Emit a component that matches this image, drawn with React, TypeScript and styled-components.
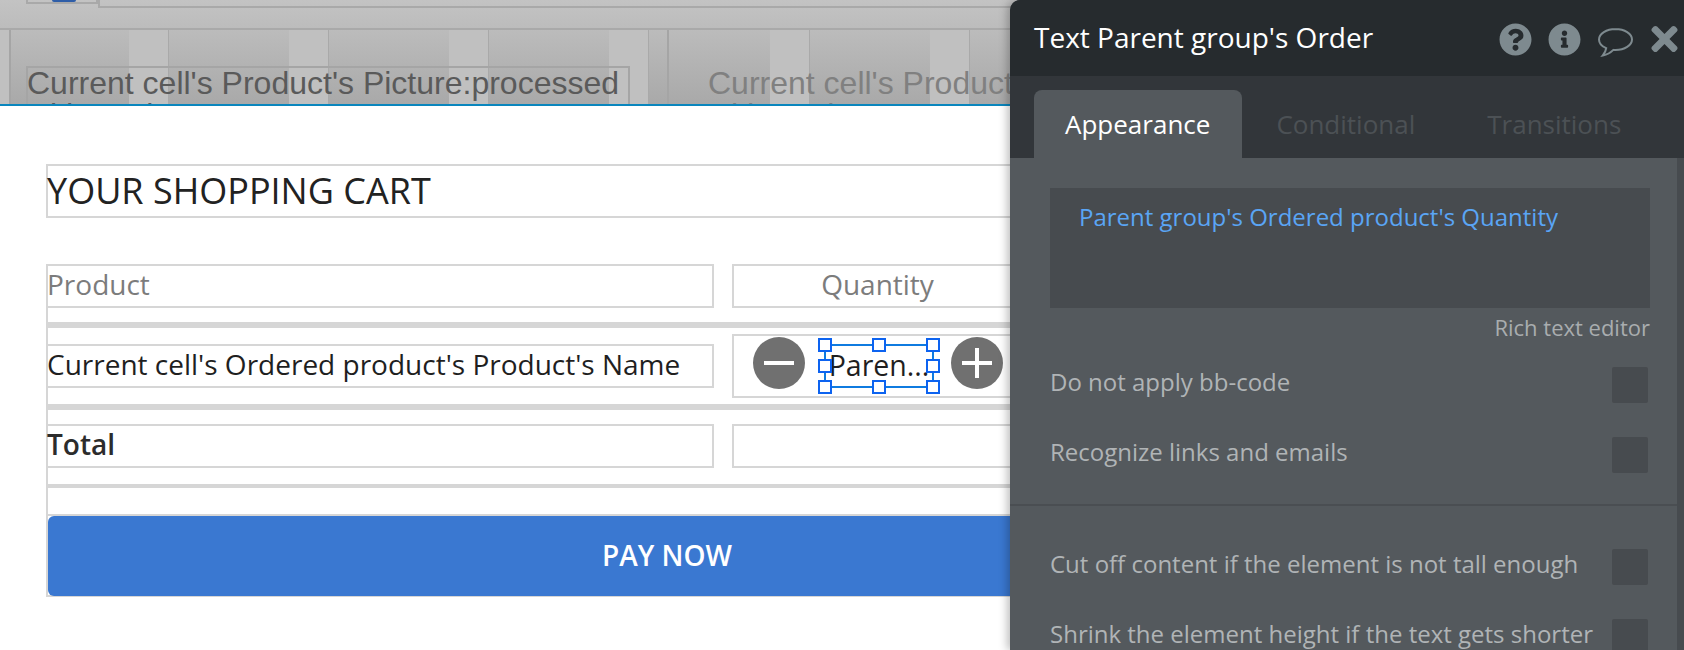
import styled, { createGlobalStyle } from "styled-components";
import { FaQuestionCircle, FaInfoCircle, FaTimes } from "react-icons/fa";

const GlobalStyle = createGlobalStyle`
  html, body {
    margin: 0;
    padding: 0;
    height: 650px;
    overflow: hidden;
    background: #fff;
    font-family: "Open Sans", sans-serif;
  }
  * { box-sizing: border-box; }
`;

const Page = styled.div`
  position: relative;
  width: 1684px;
  height: 650px;
  overflow: hidden;
`;

/* greyed out part of the canvas above the focused group */
const ShadedArea = styled.div`
  height: 106px;
  overflow: hidden;
  background: linear-gradient(180deg, #c3c3c3 0%, #a9a9a9 100%);
  border-bottom: 2px solid #0a86bd;
`;
const ShadedTop = styled.div`
  height: 30px;
  display: flex;
  align-items: flex-start;
  padding-left: 26px;
  border-bottom: 2px solid #a9a9a9;
`;
const LogoBox = styled.div`
  width: 72px;
  height: 4px;
  border: 2px solid #a9a9a9;
  border-top: 0;
  display: flex;
  justify-content: center;
`;
const LogoDot = styled.div`
  width: 24px;
  height: 2px;
  margin-left: 4px;
  border-radius: 0 0 12px 12px;
  background: #2f5ea8;
`;
const TopBar = styled.div`
  flex: 1;
  height: 8px;
  border: 2px solid #a9a9a9;
  border-top: 0;
`;
const CellRow = styled.div`
  display: flex;
  height: 76px;
`;
const Cell = styled.div<{ $width: number; $padLeft: number; $offset: number }>`
  width: ${(p) => p.$width}px;
  flex: none;
  padding: 36px 0 0 ${(p) => p.$padLeft}px;
  border-left: 2px solid #a5a5a5;
  background-image: repeating-linear-gradient(
    90deg,
    rgba(0, 0, 0, 0) 0 120px,
    #c0c0c0 120px 159px,
    #a9a9a9 159px 160px
  );
  background-position-x: ${(p) => p.$offset}px;
`;
const CellEdge = styled.div`
  width: 9px;
  flex: none;
  background: #c0c0c0;
`;
const CellText = styled.div<{ $faded?: boolean }>`
  width: ${(p) => (p.$faded ? "720px" : "604px")};
  height: 70px;
  padding: ${(p) => (p.$faded ? "1px 0 0 0" : "1px 0 0 1px")};
  outline: ${(p) => (p.$faded ? "none" : "2px solid #a5a5a5")};
  outline-offset: -2px;
  font-family: "Liberation Sans", Arial, sans-serif;
  font-size: 32px;
  line-height: 32px;
  color: ${(p) => (p.$faded ? "#808080" : "#5a5a5a")};
  white-space: pre-line;
`;

/* the group in focus */
const Canvas = styled.div`
  padding: 58px 0 0 46px;
`;
const TitleBox = styled.div`
  width: 1300px;
  height: 54px;
  border: 2px solid #d6d6d6;
  font-size: 36px;
  line-height: 50px;
  text-indent: -1px;
  color: #222;
`;
const Table = styled.div`
  width: 1300px;
  margin-top: 46px;
  height: 333px;
  border-left: 2px solid #d6d6d6;
  border-bottom: 2px solid #d6d6d6;
`;
const Row = styled.div<{ $height: number; $pad: number; $rule: number }>`
  height: ${(p) => p.$height}px;
  margin-left: -2px;
  padding-top: ${(p) => p.$pad}px;
  border-bottom: ${(p) => p.$rule}px solid #d6d6d6;
  display: grid;
  grid-template-columns: 668px 292px;
  column-gap: 18px;
  align-items: start;
`;
const TextBox = styled.div<{ $tone?: "muted" | "strong" }>`
  height: 44px;
  border: 2px solid #d6d6d6;
  font-size: 28px;
  line-height: 37px;
  text-indent: -1px;
  font-weight: ${(p) => (p.$tone === "strong" ? 600 : 400)};
  color: ${(p) => (p.$tone === "muted" ? "#7c7c7c" : p.$tone === "strong" ? "#2c2c2c" : "#1f1f1f")};
`;
const QuantityHead = styled(TextBox)`
  text-align: center;
`;
const QuantityBox = styled.div`
  height: 64px;
  margin-top: -10px;
  border: 2px solid #d6d6d6;
  display: flex;
  align-items: center;
  padding-left: 19px;
`;
const RoundButton = styled.div`
  width: 52px;
  height: 52px;
  flex: none;
  margin-bottom: 6px;
  border-radius: 50%;
  background: #707070;
  display: flex;
  align-items: center;
  justify-content: center;
`;
const Selected = styled.div`
  position: relative;
  width: 110px;
  height: 44px;
  margin: 0 17px 0 19px;
  border: 2px solid #0f7be0;
  font-size: 28.5px;
  line-height: 38px;
  color: #1f1f1f;
  text-align: center;
  white-space: nowrap;
`;
const Handle = styled.span<{ $x: 0 | 1 | 2; $y: 0 | 1 | 2 }>`
  position: absolute;
  width: 14px;
  height: 14px;
  background: #fff;
  border: 2px solid #0d63f0;
  left: ${(p) => ["-8px", "calc(50% - 7px)", "calc(100% - 6px)"][p.$x]};
  top: ${(p) => ["-8px", "calc(50% - 7px)", "calc(100% - 6px)"][p.$y]};
`;
const PayRow = styled.div`
  margin: 26px 0 0 0;
  height: 82px;
  border-top: 2px solid #d6d6d6;
`;
const PayButton = styled.div`
  height: 80px;
  background: #3a78d1;
  border-radius: 6px;
  color: #fff;
  font-size: 28px;
  font-weight: 600;
  line-height: 78px;
  padding-left: 554px;
  width: 1298px;
`;

/* property editor */
const Panel = styled.aside`
  position: absolute;
  left: 1010px;
  top: 0;
  width: 674px;
  height: 650px;
  border-radius: 10px 0 0 0;
  background: #54595d;
  overflow: hidden;
  box-shadow: -3px 0 8px rgba(0, 0, 0, 0.25);
`;
const PanelHeader = styled.div`
  height: 76px;
  background: #262b2e;
  display: flex;
  align-items: center;
  padding-left: 24px;
  color: #fff;
  font-size: 28px;
`;
const PanelTitle = styled.div`
  flex: 1;
  margin-top: -2px;
`;
const HeaderIcons = styled.div`
  display: flex;
  align-items: center;
  width: 185px;
  flex: none;
  color: #7e8a8f;
`;
const QuestionIcon = styled(FaQuestionCircle)`
  width: 33px;
  height: 33px;
  margin-top: 2px;
`;
const InfoIcon = styled(FaInfoCircle)`
  width: 33px;
  height: 33px;
  margin: 2px 0 0 16px;
`;
const BubbleIcon = styled.svg`
  width: 37px;
  height: 31px;
  margin: 8px 0 0 16px;
`;
const CloseIcon = styled(FaTimes)`
  width: 27px;
  height: 38px;
  margin: 2px 0 0 17px;
`;
const TabBar = styled.div`
  height: 82px;
  background: #32363a;
  display: flex;
  align-items: flex-end;
  padding-left: 24px;
`;
const Tab = styled.div<{ $active?: boolean }>`
  height: 68px;
  padding: 0 32px 0 31px;
  margin-right: ${(p) => (p.$active ? "3px" : "9px")};
  border-radius: 8px 8px 0 0;
  background: ${(p) => (p.$active ? "#54595d" : "transparent")};
  color: ${(p) => (p.$active ? "#fff" : "#4c5155")};
  font-size: 26px;
  line-height: 68px;
`;
const PanelBody = styled.div`
  position: relative;
  padding: 30px 34px 0 40px;
  height: 492px;
  border-right: 7px solid #474b4f;
`;
const Expression = styled.div`
  height: 120px;
  background: #474b4f;
  padding: 12px 29px;
  margin-right: -7px;
  color: #5aa5f5;
  font-size: 24px;
  line-height: 34px;
`;
const EditorLink = styled.div`
  margin: 4px -7px 0 0;
  text-align: right;
  color: #a9adaf;
  font-size: 22px;
  line-height: 30px;
`;
const Option = styled.div<{ $top: number }>`
  display: flex;
  align-items: center;
  justify-content: space-between;
  height: 36px;
  margin: ${(p) => p.$top}px -5px 0 0;
  color: #b0b4b6;
  font-size: 24px;
  line-height: 34px;
`;
const OptionLabel = styled.span`
  margin-top: -6px;
`;
const CheckBox = styled.div`
  width: 36px;
  height: 36px;
  flex: none;
  background: #474b4f;
  border-radius: 2px;
`;
const Divider = styled.div`
  height: 2px;
  margin: 31px -34px 0 -40px;
  background: #4a4e52;
`;

const handles: Array<[0 | 1 | 2, 0 | 1 | 2]> = [
  [0, 0], [1, 0], [2, 0],
  [0, 1], [2, 1],
  [0, 2], [1, 2], [2, 2],
];

function App() {
  return (
    <Page>
      <GlobalStyle />
      <ShadedArea>
        <ShadedTop>
          <LogoBox><LogoDot /></LogoBox>
          <TopBar />
        </ShadedTop>
        <CellRow>
          <CellEdge />
          <Cell $width={658} $padLeft={15} $offset={-2}>
            <CellText>{"Current cell's Product's Picture:processed\nwith Imgix"}</CellText>
          </Cell>
          <Cell $width={360} $padLeft={39} $offset={-19}>
            <CellText $faded>{"Current cell's Product's Picture:processed\nwith Imgix"}</CellText>
          </Cell>
        </CellRow>
      </ShadedArea>

      <Canvas>
        <TitleBox>YOUR SHOPPING CART</TitleBox>
        <Table>
          <Row $height={64} $pad={0} $rule={6}>
            <TextBox $tone="muted">Product</TextBox>
            <QuantityHead $tone="muted">Quantity</QuantityHead>
          </Row>
          <Row $height={82} $pad={16} $rule={6}>
            <TextBox>Current cell's Ordered product's Product's Name</TextBox>
            <QuantityBox>
              <RoundButton>
                <svg width="30" height="30" viewBox="0 0 30 30">
                  <path d="M0 15h30" stroke="#fff" strokeWidth="4" />
                </svg>
              </RoundButton>
              <Selected>
                Paren...
                {handles.map(([x, y]) => (
                  <Handle key={`${x}-${y}`} $x={x} $y={y} />
                ))}
              </Selected>
              <RoundButton>
                <svg width="30" height="30" viewBox="0 0 30 30">
                  <path d="M0 15h30M15 0v30" stroke="#fff" strokeWidth="4" />
                </svg>
              </RoundButton>
            </QuantityBox>
          </Row>
          <Row $height={78} $pad={14} $rule={4}>
            <TextBox $tone="strong">Total</TextBox>
            <TextBox />
          </Row>
          <PayRow>
            <PayButton>PAY NOW</PayButton>
          </PayRow>
        </Table>
      </Canvas>

      <Panel>
        <PanelHeader>
          <PanelTitle>Text Parent group's Order</PanelTitle>
          <HeaderIcons>
            <QuestionIcon />
            <InfoIcon />
            <BubbleIcon viewBox="0 0 37 31" fill="none">
              <path
                d="M18.5 2C9.4 2 2 6.7 2 12.5c0 3.6 2.8 6.8 7.2 8.7-.3 2.5-1.5 5-3.4 7.3 3.9-.8 8-3 10.6-5.6.7.1 1.4.1 2.1.1 9.1 0 16.5-4.7 16.5-10.5S27.6 2 18.5 2Z"
                stroke="#7e8a8f"
                strokeWidth="2"
              />
            </BubbleIcon>
            <CloseIcon />
          </HeaderIcons>
        </PanelHeader>
        <TabBar>
          <Tab $active>Appearance</Tab>
          <Tab>Conditional</Tab>
          <Tab>Transitions</Tab>
        </TabBar>
        <PanelBody>
          <Expression>Parent group's Ordered product's Quantity</Expression>
          <EditorLink>Rich text editor</EditorLink>
          <Option $top={25}>
            <OptionLabel>Do not apply bb-code</OptionLabel>
            <CheckBox />
          </Option>
          <Option $top={34}>
            <OptionLabel>Recognize links and emails</OptionLabel>
            <CheckBox />
          </Option>
          <Divider />
          <Option $top={43}>
            <OptionLabel>Cut off content if the element is not tall enough</OptionLabel>
            <CheckBox />
          </Option>
          <Option $top={34}>
            <OptionLabel>Shrink the element height if the text gets shorter</OptionLabel>
            <CheckBox />
          </Option>
        </PanelBody>
      </Panel>
    </Page>
  );
}

export default App;
